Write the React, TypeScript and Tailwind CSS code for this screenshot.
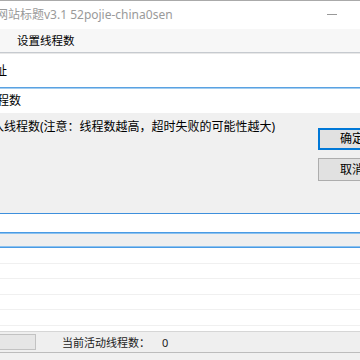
import React from "react";

const rows = [0, 1, 2, 3, 4];

export default function App() {
  return (
    <div className="w-[360px] h-[360px] overflow-hidden bg-white flex flex-col text-[12px] leading-none text-black font-['Noto_Sans','Noto_Sans_CJK_SC',sans-serif]">
      <div className="h-px bg-[#aaaaaa] shrink-0" />
      {/* title bar */}
      <div className="h-[28px] shrink-0 flex items-center justify-between">
        <span className="ml-[-4px] text-[#9a9a9a] whitespace-nowrap">网站标题v3.1 52pojie-china0sen</span>
        <div className="w-[10px] h-px bg-[#999999] mr-[23px] mt-[-1px]" />
      </div>
      {/* menu */}
      <div className="h-[23px] shrink-0 bg-[#f7f7f7] flex items-center pl-[17px] text-[11.5px]">
        设置线程数
      </div>
      <div className="h-[2px] shrink-0 border-t border-[#c6cacf] bg-[#e8e8e8]" />
      {/* main form */}
      <div className="h-[33px] shrink-0 flex items-center">
        <span className="ml-[-5px]">址</span>
      </div>
      {/* dialog */}
      <div className="h-[2px] shrink-0 border-t border-[#5aa2e2] bg-[#a3cdf0]" />
      <div className="h-[24px] shrink-0 flex items-center">
        <span className="ml-[-3px]">程数</span>
      </div>
      <div className="h-[100px] shrink-0 bg-[#f0f0f0] flex overflow-hidden">
        <div className="w-[326px] shrink-0 ml-[-8px] pt-[8px] whitespace-nowrap">
          入线程数(注意：线程数越高，超时失败的可能性越大)
        </div>
        <div className="flex flex-col gap-[8px] mt-[15px] shrink-0">
          <div className="w-[68px] h-[22px] border-2 border-[#0078d7] bg-[#e1e1e1] flex items-center justify-center">
            确定
          </div>
          <div className="w-[68px] h-[23px] border border-[#adadad] bg-[#e1e1e1] flex items-center justify-center">
            取消
          </div>
        </div>
      </div>
      <div className="h-px shrink-0 bg-[#3d8fdc]" />
      <div className="h-[18px] shrink-0 bg-white" />
      <div className="h-[2px] shrink-0 border-t border-[#4a9be4] bg-[#8cc2ef]" />
      <div className="h-[12px] shrink-0 bg-[#efefef]" />
      <div className="h-[2px] shrink-0 border-t border-[#8cc2ef] bg-[#4a9be4]" />
      {/* list rows */}
      <div className="h-[83px] shrink-0 flex flex-col">
        {rows.map((r) => (
          <div key={r} className="h-[15.5px] shrink-0 border-b border-[#f0f0f0]" />
        ))}
      </div>
      {/* status bar */}
      <div className="h-px shrink-0 bg-[#d6d6d6]" />
      <div className="h-[20px] shrink-0 bg-[#efefef] flex items-center text-[11px] text-[#222222]">
        <div className="w-[37px] h-[16px] ml-[-1px] border border-[#c2c2c2] bg-[#e6e6e6]" />
        <span className="ml-[26px]">当前活动线程数：</span>
        <span className="ml-[12px]">0</span>
      </div>
      <div className="h-px shrink-0 bg-[#bcbcbc]" />
      <div className="flex-1 bg-[#f0f0f0]" />
    </div>
  );
}
